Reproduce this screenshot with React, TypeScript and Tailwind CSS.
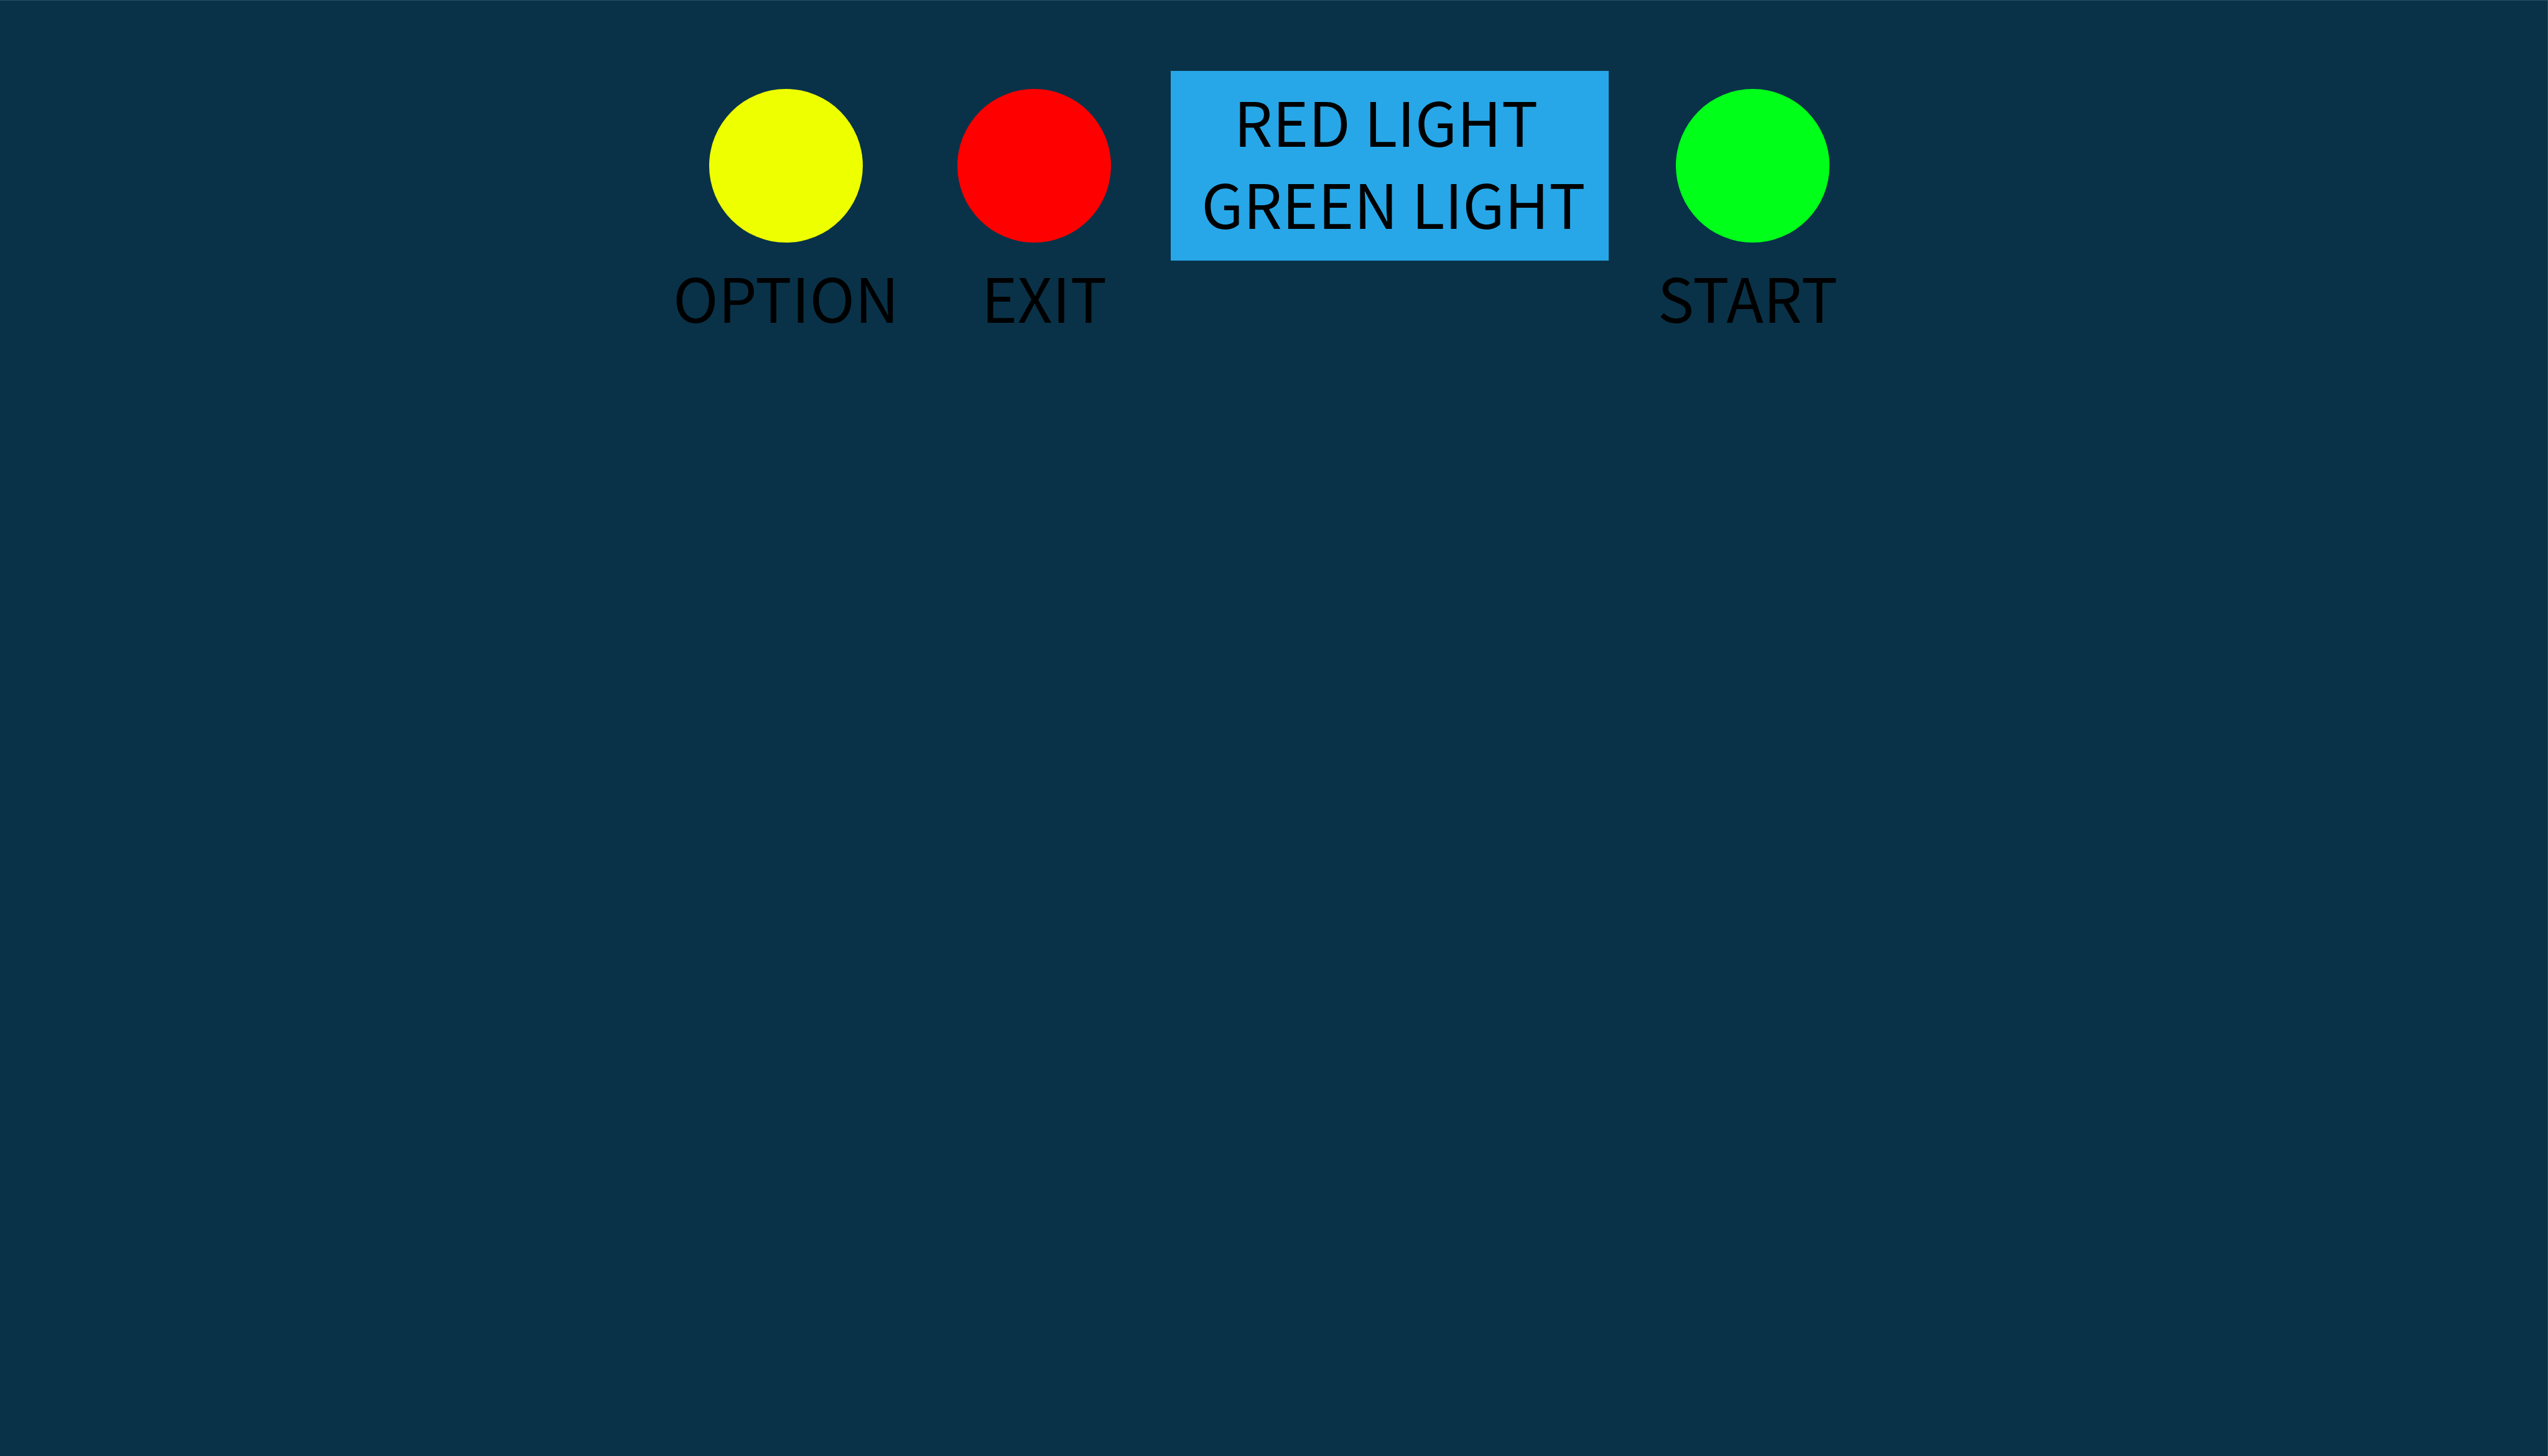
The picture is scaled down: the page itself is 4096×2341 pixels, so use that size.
import React from "react";

type LampProps = { label: string; color: string; labelClass?: string };

function Lamp({ label, color, labelClass = "" }: LampProps) {
  return (
    <button type="button" className="mt-[29px] flex w-[247px] shrink-0 cursor-pointer flex-col items-center gap-5">
      <span className={`size-[247px] rounded-full ${color}`} />
      <span className={`whitespace-nowrap ${labelClass}`}>{label}</span>
    </button>
  );
}

export default function App() {
  return (
    <main className="min-h-screen w-full border-t border-r border-[#2d4f63] bg-[#093248] font-['Noto_Sans_CJK_SC','Open_Sans',sans-serif] text-[98px] leading-[132px] text-black">
      <header className="flex items-start justify-center pt-[113px] pr-[14px]">
        <nav aria-label="Game menu" className="flex gap-[152px]">
          <Lamp label="OPTION" color="bg-[#eeff00]" />
          <Lamp label="EXIT" color="bg-[#ff0000]" labelClass="pl-8" />
        </nav>
        <h1 className="mr-[108px] ml-24 flex h-[305px] w-[704px] shrink-0 flex-col items-center bg-[#27a7e8] pt-[13px] whitespace-nowrap">
          <span className="pr-3">RED LIGHT</span>
          <span className="pl-3">GREEN LIGHT</span>
        </h1>
        <Lamp label="START" color="bg-[#00ff19]" labelClass="pr-4" />
      </header>
    </main>
  );
}
